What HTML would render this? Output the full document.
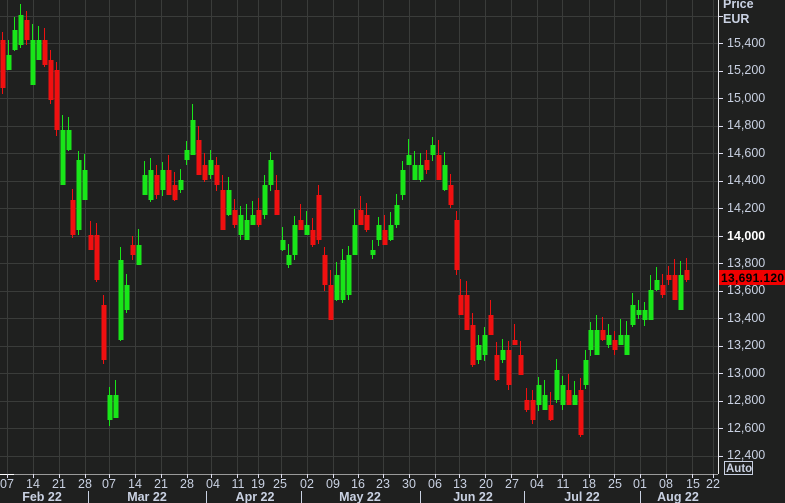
<!DOCTYPE html>
<html><head><meta charset="utf-8"><style>
html,body{margin:0;padding:0;background:#1f201f;width:785px;height:503px;overflow:hidden;font-family:"Liberation Sans",sans-serif;}
svg{position:absolute;left:0;top:0}
</style></head><body>
<svg id="s" width="785" height="503" xmlns="http://www.w3.org/2000/svg" font-family="Liberation Sans, sans-serif">
<rect width="785" height="503" fill="#1f201f"/>
<g id="grid" stroke="#3a3c3a" stroke-width="1"></g>
<g id="c"></g>
<line x1="718.5" y1="0" x2="718.5" y2="474" stroke="#e8e8e8"/>
<line x1="0" y1="474.5" x2="718" y2="474.5" stroke="#9a9a9a"/>
<line x1="0" y1="474.5" x2="14" y2="474.5" stroke="#fff"/>
<g id="ticks" stroke="#dde" stroke-width="1"></g>
<g font-size="12.5" fill="#c9d1e2">
<text x="723" y="8" font-weight="bold">Price</text>
<text x="723" y="23" font-weight="bold">EUR</text>
<text x="727" y="47">15,400</text>
<text x="727" y="74">15,200</text>
<text x="727" y="102">15,000</text>
<text x="727" y="129">14,800</text>
<text x="727" y="157">14,600</text>
<text x="727" y="184">14,400</text>
<text x="727" y="212">14,200</text>
<text x="727" y="240" font-weight="bold" fill="#fff">14,000</text>
<text x="727" y="267">13,800</text>
<text x="727" y="294">13,600</text>
<text x="727" y="322">13,400</text>
<text x="727" y="349">13,200</text>
<text x="727" y="377">13,000</text>
<text x="727" y="404">12,800</text>
<text x="727" y="432">12,600</text>
<text x="727" y="459">12,400</text>
</g>
<rect x="719" y="270" width="66" height="15" fill="#f00000"/>
<text x="721" y="282" font-size="12" font-weight="bold" fill="#000" textLength="63">13,691.120</text>
<rect x="724.5" y="461.5" width="28" height="13" fill="none" stroke="#c9d1e2"/>
<text x="726" y="472" font-size="11.5" font-weight="bold" fill="#c9d1e2">Auto</text>
<g id="dl" font-size="12.5" fill="#c9d1e2" text-anchor="middle">
<text x="7" y="488">07</text><text x="33" y="488">14</text><text x="59" y="488">21</text><text x="85" y="488">28</text>
<text x="109" y="488">07</text><text x="135" y="488">14</text><text x="161" y="488">21</text><text x="187" y="488">28</text>
<text x="213" y="488">04</text><text x="238" y="488">11</text><text x="258" y="488">19</text><text x="280" y="488">25</text>
<text x="307" y="488">02</text><text x="333" y="488">09</text><text x="358" y="488">16</text><text x="383" y="488">23</text><text x="409" y="488">30</text>
<text x="435" y="488">06</text><text x="460" y="488">13</text><text x="486" y="488">20</text><text x="512" y="488">27</text>
<text x="537" y="488">04</text><text x="563" y="488">11</text><text x="589" y="488">18</text><text x="615" y="488">25</text>
<text x="640" y="488">01</text><text x="666" y="488">08</text><text x="693" y="488">15</text><text x="713" y="488">22</text>
</g>
<g font-size="12.5" font-weight="bold" fill="#c9d1e2" text-anchor="middle">
<text x="42" y="501">Feb 22</text><text x="147" y="501">Mar 22</text><text x="255" y="501">Apr 22</text>
<text x="360" y="501">May 22</text><text x="473" y="501">Jun 22</text><text x="582" y="501">Jul 22</text><text x="678" y="501">Aug 22</text>
</g>
<g stroke="#c9d1e2"><line x1="88.5" y1="491" x2="88.5" y2="503"/><line x1="206.5" y1="491" x2="206.5" y2="503"/><line x1="301.5" y1="491" x2="301.5" y2="503"/><line x1="420.5" y1="491" x2="420.5" y2="503"/><line x1="524.5" y1="491" x2="524.5" y2="503"/><line x1="640.5" y1="491" x2="640.5" y2="503"/></g>
</svg>
<script>
var NS="http://www.w3.org/2000/svg";
function el(p,t,a){var e=document.createElementNS(NS,t);for(var k in a)e.setAttribute(k,a[k]);p.appendChild(e);return e;}
var g=document.getElementById('grid'),tk=document.getElementById('ticks');
var xs=[7,33,59,85,109,135,161,187,211,237,258,281,307,333,358,383,409,435,459,485,511,537,562,589,614,640,666,692,713];
xs.forEach(function(x){el(g,'line',{x1:x+.5,y1:0,x2:x+.5,y2:474});el(tk,'line',{x1:x+.5,y1:474,x2:x+.5,y2:478});});
for(var i=0;i<17;i++){var y=Math.round(15.5+i*27.5)+.5;el(g,'line',{x1:0,y1:y,x2:718,y2:y});el(tk,'line',{x1:718,y1:y,x2:723,y2:y});}
var d=[[2,40,88,'r'],[8,55,70,'g'],[14,30,50,'g'],[20,15,45,'g'],[26,20,40,'r'],[32,40,85,'g'],[38,40,60,'g'],[44,40,65,'r'],[50,60,100,'r'],[56,70,130,'r'],[62,130,185,'g'],[68,130,150,'g'],[72,200,235,'r'],[78,160,230,'g'],[84,170,200,'g'],[90,235,250,'r'],[96,235,280,'r'],[103,305,360,'r'],[109,395,420,'g'],[115,395,418,'g'],[120,260,340,'g'],[126,285,310,'g'],[132,245,255,'r'],[138,245,265,'g'],[144,175,195,'g'],[150,170,200,'g'],[156,175,195,'r'],[162,170,190,'g'],[168,170,195,'r'],[174,185,200,'r'],[180,180,190,'g'],[186,150,160,'g'],[192,120,155,'g'],[198,140,175,'r'],[204,165,180,'r'],[210,160,175,'g'],[216,165,185,'r'],[222,190,230,'r'],[228,190,215,'g'],[234,210,225,'r'],[240,215,235,'g'],[246,220,240,'g'],[252,215,225,'g'],[258,210,225,'r'],[264,185,215,'g'],[270,160,185,'g'],[276,190,215,'r'],[282,240,250,'g'],[288,255,265,'g'],[294,225,255,'g'],[300,220,230,'r'],[306,225,235,'g'],[312,230,245,'r'],[318,195,240,'r'],[324,255,285,'r'],[330,285,320,'r'],[336,275,300,'g'],[342,260,300,'g'],[348,255,295,'g'],[354,225,255,'g'],[360,210,225,'r'],[366,215,230,'r'],[372,250,255,'g'],[378,225,240,'g'],[384,230,245,'r'],[390,225,240,'g'],[396,205,225,'g'],[402,170,195,'g'],[408,155,165,'g'],[414,165,180,'g'],[420,165,180,'g'],[426,160,170,'r'],[432,145,155,'g'],[438,155,180,'r'],[444,165,190,'g'],[450,185,205,'r'],[456,220,270,'r'],[460,295,315,'r'],[466,295,330,'r'],[472,325,365,'r'],[478,345,360,'g'],[484,335,355,'g'],[490,315,335,'r'],[496,355,380,'r'],[502,350,360,'g'],[508,350,385,'r'],[514,340,345,'r'],[520,355,375,'r'],[526,400,410,'r'],[532,400,420,'r'],[538,385,405,'g'],[544,395,410,'g'],[550,405,420,'r'],[556,370,400,'g'],[562,385,405,'g'],[568,390,405,'r'],[574,395,405,'g'],[580,390,435,'r'],[585,360,385,'g'],[590,330,350,'g'],[596,330,355,'g'],[602,330,340,'r'],[608,335,345,'g'],[614,340,350,'r'],[620,335,345,'g'],[626,335,355,'g'],[632,305,325,'g'],[638,310,315,'g'],[644,310,320,'g'],[650,290,320,'g'],[656,280,290,'g'],[662,285,295,'r'],[668,275,280,'r'],[674,275,300,'r'],[680,275,310,'g'],[686,270,280,'r']];
var c=document.getElementById('c');
d.forEach(function(k,i){var col=k[3]=='g'?'#19e619':'#f01010';var w=8+(i*7%9);
el(c,'line',{x1:k[0]+.5,y1:k[1]-w,x2:k[0]+.5,y2:k[2]+(14-w),stroke:col});
el(c,'rect',{x:k[0]-1.5,y:k[1],width:5,height:Math.max(2,k[2]-k[1]),fill:col});});
</script>
</body></html>
